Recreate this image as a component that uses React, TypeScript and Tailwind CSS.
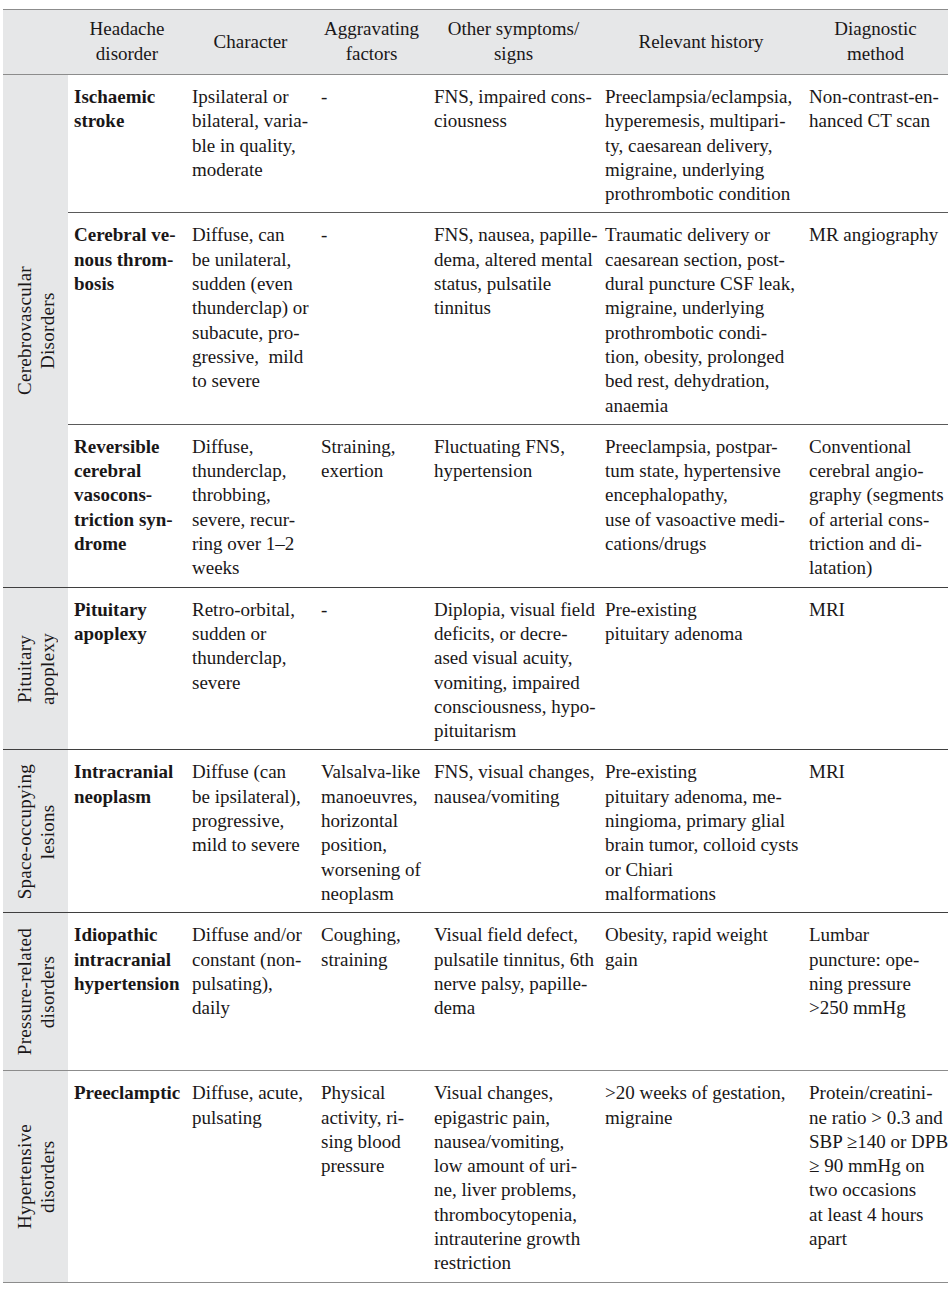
type Row = {
  name: string[]
  cells: string[][]
}

type Group = {
  label: string[]
  rows: Row[]
  line: string
  minHeight?: string
}

const HEADERS = [
  ['Headache', 'disorder'],
  ['Character'],
  ['Aggravating', 'factors'],
  ['Other symptoms/', 'signs'],
  ['Relevant history'],
  ['Diagnostic', 'method'],
]

const GROUPS: Group[] = [
  {
    label: ['Cerebrovascular', 'Disorders'],
    line: 'border-[#3f3f3f]',
    rows: [
      {
        name: ['Ischaemic', 'stroke'],
        cells: [
          ['Ipsilateral or', 'bilateral, varia-', 'ble in quality,', 'moderate'],
          ['-'],
          ['FNS, impaired cons-', 'ciousness'],
          [
            'Preeclampsia/eclampsia,',
            'hyperemesis, multipari-',
            'ty, caesarean delivery,',
            'migraine, underlying',
            'prothrombotic condition',
          ],
          ['Non-contrast-en-', 'hanced CT scan'],
        ],
      },
      {
        name: ['Cerebral ve-', 'nous throm-', 'bosis'],
        cells: [
          [
            'Diffuse, can',
            'be unilateral,',
            'sudden (even',
            'thunderclap) or',
            'subacute, pro-',
            'gressive,\u00a0 mild',
            'to severe',
          ],
          ['-'],
          ['FNS, nausea, papille-', 'dema, altered mental', 'status, pulsatile', 'tinnitus'],
          [
            'Traumatic delivery or',
            'caesarean section, post-',
            'dural puncture CSF leak,',
            'migraine, underlying',
            'prothrombotic condi-',
            'tion, obesity, prolonged',
            'bed rest, dehydration,',
            'anaemia',
          ],
          ['MR angiography'],
        ],
      },
      {
        name: ['Reversible', 'cerebral', 'vasocons-', 'triction syn-', 'drome'],
        cells: [
          ['Diffuse,', 'thunderclap,', 'throbbing,', 'severe, recur-', 'ring over 1–2', 'weeks'],
          ['Straining,', 'exertion'],
          ['Fluctuating FNS,', 'hypertension'],
          [
            'Preeclampsia, postpar-',
            'tum state, hypertensive',
            'encephalopathy,',
            'use of vasoactive medi-',
            'cations/drugs',
          ],
          [
            'Conventional',
            'cerebral angio-',
            'graphy (segments',
            'of arterial cons-',
            'triction and di-',
            'latation)',
          ],
        ],
      },
    ],
  },
  {
    label: ['Pituitary', 'apoplexy'],
    line: 'border-[#3f3f3f]',
    rows: [
      {
        name: ['Pituitary', 'apoplexy'],
        cells: [
          ['Retro-orbital,', 'sudden or', 'thunderclap,', 'severe'],
          ['-'],
          [
            'Diplopia, visual field',
            'deficits, or decre-',
            'ased visual acuity,',
            'vomiting, impaired',
            'consciousness, hypo-',
            'pituitarism',
          ],
          ['Pre-existing', 'pituitary adenoma'],
          ['MRI'],
        ],
      },
    ],
  },
  {
    label: ['Space-occupying', 'lesions'],
    line: 'border-[#3f3f3f]',
    rows: [
      {
        name: ['Intracranial', 'neoplasm'],
        cells: [
          ['Diffuse (can', 'be ipsilateral),', 'progressive,', 'mild to severe'],
          ['Valsalva-like', 'manoeuvres,', 'horizontal', 'position,', 'worsening of', 'neoplasm'],
          ['FNS, visual changes,', 'nausea/vomiting'],
          [
            'Pre-existing',
            'pituitary adenoma, me-',
            'ningioma, primary glial',
            'brain tumor, colloid cysts',
            'or Chiari',
            'malformations',
          ],
          ['MRI'],
        ],
      },
    ],
  },
  {
    label: ['Pressure-related', 'disorders'],
    line: 'border-[#8c8c8c]',
    minHeight: 'min-h-[158px]',
    rows: [
      {
        name: ['Idiopathic', 'intracranial', 'hypertension'],
        cells: [
          ['Diffuse and/or', 'constant (non-', 'pulsating),', 'daily'],
          ['Coughing,', 'straining'],
          ['Visual field defect,', 'pulsatile tinnitus, 6th', 'nerve palsy, papille-', 'dema'],
          ['Obesity, rapid weight', 'gain'],
          ['Lumbar', 'puncture: ope-', 'ning pressure', '>250 mmHg'],
        ],
      },
    ],
  },
  {
    label: ['Hypertensive', 'disorders'],
    line: 'border-[#8c8c8c]',
    rows: [
      {
        name: ['Preeclamptic'],
        cells: [
          ['Diffuse, acute,', 'pulsating'],
          ['Physical', 'activity, ri-', 'sing blood', 'pressure'],
          [
            'Visual changes,',
            'epigastric pain,',
            'nausea/vomiting,',
            'low amount of uri-',
            'ne, liver problems,',
            'thrombocytopenia,',
            'intrauterine growth',
            'restriction',
          ],
          ['>20 weeks of gestation,', 'migraine'],
          [
            'Protein/creatini-',
            'ne ratio > 0.3 and',
            'SBP ≥140 or DPB',
            '≥ 90 mmHg on',
            'two occasions',
            'at least 4 hours',
            'apart',
          ],
        ],
      },
    ],
  },
]

const COLUMNS = 'grid grid-cols-[118px_129px_113px_171px_204px_145px]'

const Lines = ({ lines }: { lines: string[] }) => (
  <>
    {lines.map((line, index) => (
      <span key={`${line}-${index}`} className="block whitespace-nowrap">
        {line}
      </span>
    ))}
  </>
)

export default function App() {
  return (
    <div className="min-h-[1290px] bg-white pt-[9px] pl-[3px] font-['Liberation_Serif',serif] text-[19px] leading-[24.3px] text-[#1a1718]">
      <div className="w-[945px]">
        <div className="flex h-[66px] border-y border-[#8c8c8c] bg-[#e6e7e8] leading-[25px]">
          <div className="w-[65px] shrink-0" />
          <div className={COLUMNS}>
            {HEADERS.map((header) => (
              <div key={header.join(' ')} className="flex flex-col items-center justify-center pb-[2px] text-center">
                <Lines lines={header} />
              </div>
            ))}
          </div>
        </div>

        {GROUPS.map((group) => (
          <div key={group.label.join(' ')} className={`flex border-b ${group.line} ${group.minHeight ?? ''}`}>
            <div className="flex w-[65px] shrink-0 items-center justify-center bg-[#e6e7e8] leading-[23px]">
              <div className="rotate-180 text-center tracking-[0.3px] [writing-mode:vertical-rl]">
                <Lines lines={group.label} />
              </div>
            </div>
            <div className="flex flex-col">
              {group.rows.map((row, index) => (
                <div
                  key={row.name.join(' ')}
                  className={`${COLUMNS} pt-[10px] pb-[6px] ${index > 0 ? 'border-t border-[#5a5a5a]' : ''}`}
                >
                  <div className="pl-[6px] font-bold">
                    <Lines lines={row.name} />
                  </div>
                  {row.cells.map((cell, cellIndex) => {
                    const key = `cell-${cellIndex}`

                    return (
                      <div key={key} className="pl-[6px]">
                        <Lines lines={cell} />
                      </div>
                    )
                  })}
                </div>
              ))}
            </div>
          </div>
        ))}
      </div>
    </div>
  )
}
